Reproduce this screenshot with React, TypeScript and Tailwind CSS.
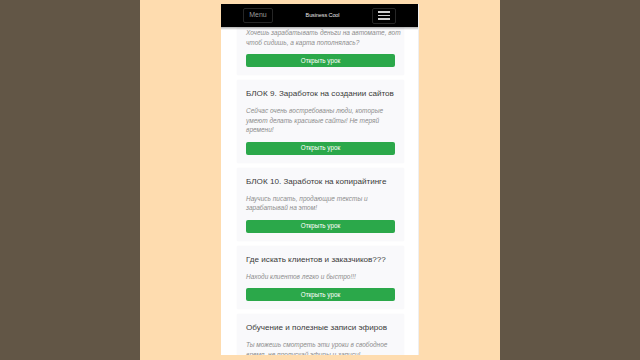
import React from "react";

type Card = { title: string; desc: string[] };

const cards: Card[] = [
  {
    title: "БЛОК 8. Пассивный доход",
    desc: ["Хочешь зарабатывать деньги на автомате, вот", "чтоб сидишь, а карта пополнялась?"],
  },
  {
    title: "БЛОК 9. Заработок на создании сайтов",
    desc: ["Сейчас очень востребованы люди, которые", "умеют делать красивые сайты! Не теряй", "времени!"],
  },
  {
    title: "БЛОК 10. Заработок на копирайтинге",
    desc: ["Научись писать, продающие тексты и", "зарабатывай на этом!"],
  },
  {
    title: "Где искать клиентов и заказчиков???",
    desc: ["Находи клиентов легко и быстро!!!"],
  },
  {
    title: "Обучение и полезные записи эфиров",
    desc: ["Ты можешь смотреть эти уроки в свободное", "время, не пропускай эфиры и записи!"],
  },
];

function CardView({ c }: { c: Card }) {
  return (
    <div className="ml-[16px] mr-[14px] bg-[#f9f9fb] px-[9px] pt-[8px] pb-[8px] shadow-[0_0_2px_rgba(0,0,0,0.03)]">
      <div className="text-[8.1px] leading-[11px] text-[#3a3a3a] whitespace-nowrap">{c.title}</div>
      <div className="mt-[7px] text-[6.5px] leading-[9.5px] italic text-[#8c8c8c]">
        {c.desc.map((d, i) => (
          <div key={i} className="whitespace-nowrap">{d}</div>
        ))}
      </div>
      <div className="mt-[7px] flex h-[13px] items-center justify-center rounded-[2px] bg-[#2ba84a] text-[6.3px] text-white">
        Открыть урок
      </div>
    </div>
  );
}

export default function App() {
  return (
    <div
      className="flex h-[360px] w-[640px] overflow-hidden"
      style={{ fontFamily: '"Liberation Sans", Arial, sans-serif' }}
    >
      <div className="w-[140px] bg-[#625646]" />
      <div className="w-[81px] bg-[#fedcaf]" />
      <div className="flex w-[198px] flex-col bg-[#fedcaf] pt-[4px]">
        <div className="relative h-[351px] overflow-hidden bg-white border-r border-[#efefef]">
          <div className="mt-[-2px] flex flex-col gap-[5px]">
            {cards.map((c, i) => (
              <CardView key={i} c={c} />
            ))}
          </div>
          <div className="absolute inset-x-0 top-0 flex h-[23px] items-center bg-black">
            <div className="ml-[22px] flex h-[15px] w-[30px] items-center justify-center rounded-[2px] border border-[#262626] text-[7px] text-[#9a9a9a]">
              Menu
            </div>
            <div className="flex-1 text-center text-[5.5px] tracking-[-0.1px] text-[#e6e6e6]">Business Cool</div>
            <div className="mr-[22px] flex h-[16px] w-[24px] flex-col items-center justify-center gap-[2px] rounded-[2px] border border-[#262626]">
              <div className="h-[1.5px] w-[12px] bg-[#cfcfcf]" />
              <div className="h-[1.5px] w-[12px] bg-[#cfcfcf]" />
              <div className="h-[1.5px] w-[12px] bg-[#cfcfcf]" />
            </div>
          </div>
          <div className="absolute inset-x-0 top-[23px] h-[3px] bg-gradient-to-b from-black/30 to-transparent" />
        </div>
      </div>
      <div className="w-[81px] bg-[#fedcaf]" />
      <div className="w-[140px] bg-[#625646]" />
    </div>
  );
}
